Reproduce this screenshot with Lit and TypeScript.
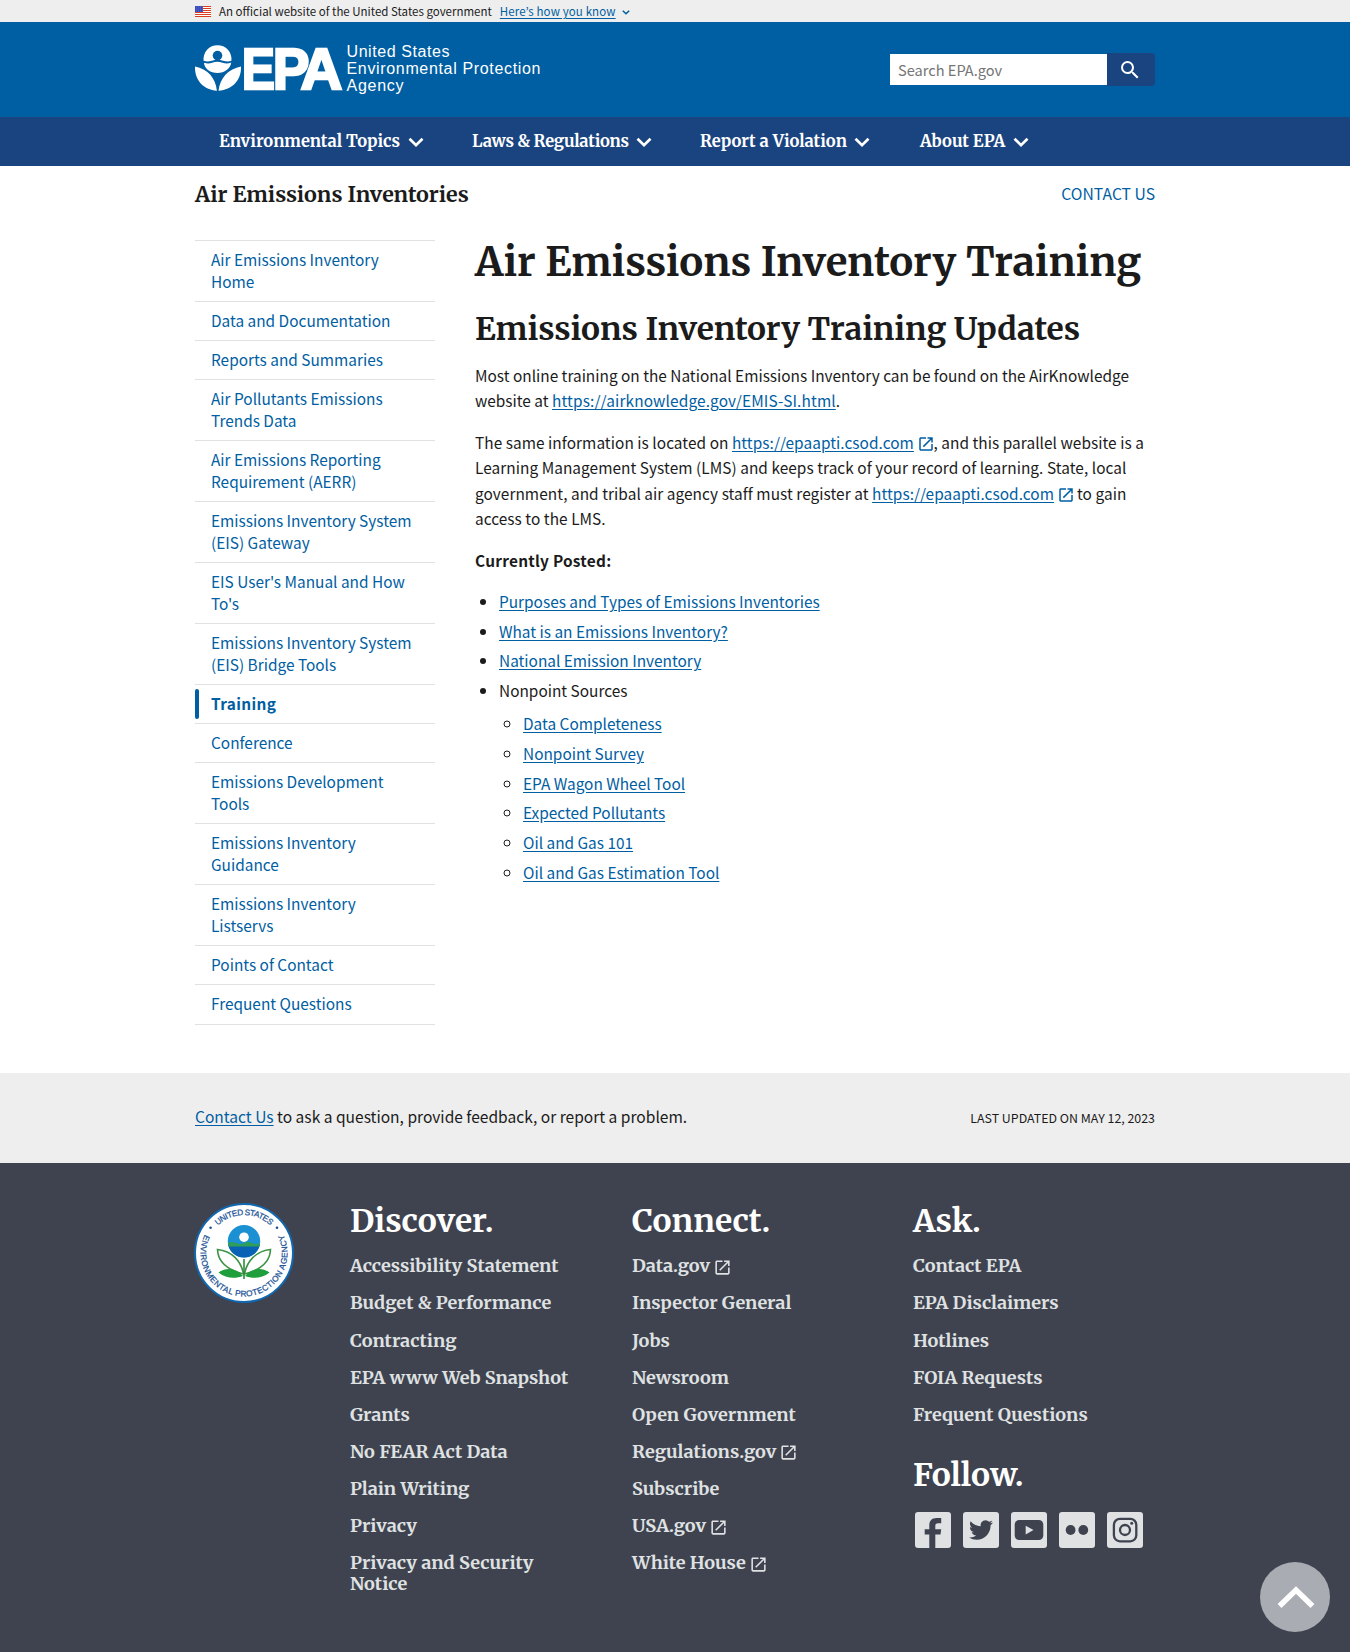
import { LitElement, html, svg, css, nothing } from "lit";
import { customElement, property } from "lit/decorators.js";

type Link = { label: string; external?: boolean };

const NAV = ["Environmental Topics", "Laws & Regulations", "Report a Violation", "About EPA"];

const SIDE = [
  "Air Emissions Inventory Home",
  "Data and Documentation",
  "Reports and Summaries",
  "Air Pollutants Emissions Trends Data",
  "Air Emissions Reporting Requirement (AERR)",
  "Emissions Inventory System (EIS) Gateway",
  "EIS User's Manual and How To's",
  "Emissions Inventory System (EIS) Bridge Tools",
  "Training",
  "Conference",
  "Emissions Development Tools",
  "Emissions Inventory Guidance",
  "Emissions Inventory Listservs",
  "Points of Contact",
  "Frequent Questions",
];

const POSTED = [
  "Purposes and Types of Emissions Inventories",
  "What is an Emissions Inventory?",
  "National Emission Inventory",
];

const NONPOINT = [
  "Data Completeness",
  "Nonpoint Survey",
  "EPA Wagon Wheel Tool",
  "Expected Pollutants",
  "Oil and Gas 101",
  "Oil and Gas Estimation Tool",
];

const DISCOVER: Link[] = [
  { label: "Accessibility Statement" },
  { label: "Budget & Performance" },
  { label: "Contracting" },
  { label: "EPA www Web Snapshot" },
  { label: "Grants" },
  { label: "No FEAR Act Data" },
  { label: "Plain Writing" },
  { label: "Privacy" },
  { label: "Privacy and Security Notice" },
];

const CONNECT: Link[] = [
  { label: "Data.gov", external: true },
  { label: "Inspector General" },
  { label: "Jobs" },
  { label: "Newsroom" },
  { label: "Open Government" },
  { label: "Regulations.gov", external: true },
  { label: "Subscribe" },
  { label: "USA.gov", external: true },
  { label: "White House", external: true },
];

const ASK: Link[] = [
  { label: "Contact EPA" },
  { label: "EPA Disclaimers" },
  { label: "Hotlines" },
  { label: "FOIA Requests" },
  { label: "Frequent Questions" },
];

const launchIcon = html`<svg class="launch" viewBox="0 0 24 24" aria-hidden="true">
  <path
    fill="currentColor"
    d="M19 19H5V5h7V3H5c-1.11 0-2 .9-2 2v14c0 1.1.89 2 2 2h14c1.1 0 2-.9 2-2v-7h-2v7zM14 3v2h3.59l-9.83 9.83 1.41 1.41L19 6.41V10h2V3h-7z"
  />
</svg>`;

@customElement("epa-banner")
export class EpaBanner extends LitElement {
  static styles = css`
    :host { display: block; background: #eee; }
    .inner {
      width: 960px;
      height: 22px;
      margin: 0 auto;
      display: flex;
      align-items: center;
      font-size: 11.5px;
      line-height: 16px;
    }
    .flag { width: 16px; height: 11px; margin-right: 8px; }
    a {
      margin-left: 8px;
      color: #005ea2;
      letter-spacing: 0.12px;
      text-decoration: underline;
      text-underline-offset: 1.5px;
    }
    .chev { width: 8px; height: 5px; margin: 3px 0 0 6px; }
  `;
  render() {
    return html`<div class="inner">
      <svg class="flag" viewBox="0 0 16 11" aria-hidden="true">
        <rect width="16" height="11" fill="#fff" />
        ${[0, 2, 4, 6, 8, 10].map((y) => svg`<rect y=${y} width="16" height="1" fill="#db3e1f" />`)}
        <rect width="8" height="6" fill="#1e33b1" />
        ${[1, 3, 5].map((y) => [1, 3, 5, 7].map((x) => svg`<rect x=${x - 0.3} y=${y - 0.4} width=".8" height=".8" fill="#fff" />`))}
      </svg>
      <span>An official website of the United States government</span>
      <a>Here’s how you know</a>
      <svg class="chev" viewBox="0 0 8 5" aria-hidden="true">
        <path d="M.8.7 4 3.8 7.2.7" fill="none" stroke="#005ea2" stroke-width="1.5" />
      </svg>
    </div>`;
  }
}

@customElement("epa-header")
export class EpaHeader extends LitElement {
  static styles = css`
    :host { display: block; }
    .top { background: #005ea2; }
    .bar {
      width: 960px;
      height: 95px;
      margin: 0 auto;
      display: flex;
      align-items: center;
      justify-content: space-between;
    }
    .logo { width: 350px; height: 52px; margin-bottom: 1px; overflow: visible; }
    .logo text { fill: #fff; font-family: "Liberation Sans", Arial, sans-serif; }
    .word { font-weight: bold; stroke: #fff; stroke-width: 2.4px; }
    .search { display: flex; align-items: center; }
    .field {
      box-sizing: border-box;
      width: 217px;
      height: 31px;
      padding: 0 8px;
      background: #fff;
      color: #757575;
      font-size: 14.6px;
      line-height: 31.5px;
    }
    .go {
      width: 48px;
      height: 33px;
      display: flex;
      align-items: center;
      justify-content: center;
      background: #1a4480;
      border-radius: 0 4px 4px 0;
    }
    .go svg { width: 24px; height: 24px; margin-right: 2px; }
    nav { background: #1a4480; }
    .items {
      box-sizing: border-box;
      width: 960px;
      height: 49px;
      margin: 0 auto;
      padding: 1px 24px 0;
      display: grid;
      grid-template-columns: 253px 228px 220px auto;
      align-items: center;
      color: #fff;
      font: bold 16.5px/24px Merriweather, "Noto Serif", serif;
    }
    .item { display: flex; align-items: center; white-space: nowrap; }
    .item:nth-child(2) { letter-spacing: -0.23px; }
    .item svg { width: 16px; height: 11px; margin-left: 7.5px; margin-top: 0; }
  `;
  render() {
    return html`
      <div class="top">
        <div class="bar">
          <svg class="logo" viewBox="0 0 350 52" role="img">
            <path fill="#fff" d="M8.6 17.8A14 14 0 1 1 36.400 17.800c-3 1.100-5.500.9-8.400-.1-3.800-1.300-7-1.300-11 0-2.900 1-5.400 1.200-8.400.1z" />
            <circle cx="22.500" cy="12.600" r="4.800" fill="#005ea2" />
            <path fill="#fff" d="M8.900 19.700c3 1 5.500 1 8.200.1 3.600-1.300 6.800-1.200 10.500 0 2.800.9 5.700.9 8.600-.2C35.500 26 29.600 30 22.500 30S9.600 26 8.900 19.700z" />
            <path fill="#fff" d="M0 23.500C12.500 26 20.500 34.500 21.900 47.800 8.500 46.500-.5 37.500 0 23.500z" />
            <path fill="#fff" d="M46 23.500C33.500 26 25 34.500 23.500 47.800 37 46.500 46.500 37.500 46 23.500z" />
            <text class="word" font-size="58" transform="translate(46.700 45.700) scale(.86 1)">E</text>
            <text class="word" font-size="58" transform="translate(77.700 45.700) scale(.95 1)">P</text>
            <text class="word" font-size="58" transform="translate(105.500 45.700) scale(1 1)">A</text>
            <g font-size="16">
              <text x="151.500" y="13.900" textLength="103" lengthAdjust="spacing">United States</text>
              <text x="151.500" y="30.500" textLength="194" lengthAdjust="spacing">Environmental Protection</text>
              <text x="151.500" y="47.500" textLength="57" lengthAdjust="spacing">Agency</text>
            </g>
          </svg>
          <div class="search">
            <div class="field">Search EPA.gov</div>
            <div class="go">
              <svg viewBox="0 0 24 24" aria-hidden="true">
                <path
                  fill="#fff"
                  d="M15.500 14h-.79l-.28-.27A6.471 6.471 0 0 0 16 9.500 6.500 6.500 0 1 0 9.500 16c1.610 0 3.090-.59 4.230-1.570l.27.28v.79l5 4.990L20.490 19l-4.990-5zm-6 0C7.010 14 5 11.990 5 9.500S7.010 5 9.500 5 14 7.010 14 9.500 11.990 14 9.500 14z"
                />
              </svg>
            </div>
          </div>
        </div>
      </div>
      <nav>
        <div class="items">
          ${NAV.map(
            (n) => html`<span class="item"
              >${n}<svg viewBox="0 0 16 11" aria-hidden="true">
                <path d="M1.500 1.700 8 8.200l6.500-6.500" fill="none" stroke="#fff" stroke-width="2.700" /></svg
            ></span>`
          )}
        </div>
      </nav>
    `;
  }
}

@customElement("epa-sidenav")
export class EpaSidenav extends LitElement {
  static styles = css`
    :host { display: block; }
    ul {
      list-style: none;
      margin: 0;
      padding: 0 0 1px;
      border-bottom: 1px solid #dfe1e2;
    }
    li {
      position: relative;
      border-top: 1px solid #dfe1e2;
      padding: 7px 16px 9px;
      color: #005ea2;
      font-size: 15.400px;
      line-height: 22px;
    }
    .current { font-weight: bold; letter-spacing: 0.35px; }
    .current::after {
      content: "";
      position: absolute;
      left: 0;
      top: 4px;
      bottom: 4px;
      width: 4px;
      border-radius: 2px;
      background: #005ea2;
    }
  `;
  render() {
    return html`<ul>
      ${SIDE.map((s) => html`<li class=${s === "Training" ? "current" : "entry"}>${s}</li>`)}
    </ul>`;
  }
}

@customElement("epa-article")
export class EpaArticle extends LitElement {
  static styles = css`
    :host { display: block; font-size: 15.400px; line-height: 25.400px; }
    h1, h2 {
      font-family: Merriweather, "Noto Serif", serif;
      font-weight: bold;
      margin: 0;
      white-space: nowrap;
    }
    h1 { font-size: 40.100px; line-height: 48px; }
    h2 { font-size: 31.700px; line-height: 38px; margin: 24px 0 14.700px; }
    p { margin: 0 0 16.100px; }
    .lms { letter-spacing: 0.05px; }
    b { letter-spacing: 0.25px; }
    a { color: #005ea2; text-decoration: underline; text-underline-offset: 2px; }
    .url { letter-spacing: 0.13px; }
    .launch { width: 18px; height: 18px; margin: 0 -1.500px 0 3px; color: #005ea2; vertical-align: -4px; }
    ul { margin: 0; padding-left: 24px; }
    li { margin-bottom: 4.240px; }
    ul ul { padding-top: 8px; list-style: circle; }
  `;
  render() {
    return html`
      <h1>Air Emissions Inventory Training</h1>
      <h2>Emissions Inventory Training Updates</h2>
      <p>
        Most online training on the National Emissions Inventory can be found on the AirKnowledge website at
        <a class="url">https://airknowledge.gov/EMIS-SI.html</a>.
      </p>
      <p class="lms">
        The same information is located on <a>https://epaapti.csod.com</a>${launchIcon}, and this parallel website is a
        Learning Management System (LMS) and keeps track of your record of learning. State, local government, and tribal
        air agency staff must register at <a>https://epaapti.csod.com</a>${launchIcon} to gain access to the LMS.
      </p>
      <p><b>Currently Posted:</b></p>
      <ul>
        ${POSTED.map((t) => html`<li><a>${t}</a></li>`)}
        <li>
          Nonpoint Sources
          <ul>
            ${NONPOINT.map((t) => html`<li><a>${t}</a></li>`)}
          </ul>
        </li>
      </ul>
    `;
  }
}

@customElement("epa-seal")
export class EpaSeal extends LitElement {
  static styles = css`
    :host { display: block; width: 100px; height: 100px; }
    svg { display: block; }
    text { font: 8.200px "Liberation Sans", Arial, sans-serif; fill: #1a5296; stroke: #1a5296; stroke-width: 0.25px; }
  `;
  render() {
    return html`<svg width="100" height="100" viewBox="0 0 100 100" role="img">
      <defs>
        <path id="arc-top" d="M12 50a38 38 0 0 1 76 0" />
        <path id="arc-bottom" d="M11.200 30.600a43.400 43.400 0 1 0 77.600 0" />
      </defs>
      <circle cx="50" cy="50" r="49" fill="#fff" stroke="#1168b0" stroke-width="2" />
      <text text-anchor="middle" textLength="58"><textPath href="#arc-top" startOffset="50%" textLength="58">UNITED STATES</textPath></text>
      <text text-anchor="middle" textLength="174"><textPath href="#arc-bottom" startOffset="50%" textLength="174">ENVIRONMENTAL PROTECTION AGENCY</textPath></text>
      <circle cx="16.600" cy="24.800" r="1.300" fill="#1a5296" />
      <circle cx="83" cy="24.800" r="1.300" fill="#1a5296" />
      <circle cx="50" cy="38.300" r="16.200" fill="#1b90d2" />
      <path fill="#0a62b4" d="M34.200 42a16.200 16.200 0 0 0 31.600 0z" />
      <path fill="#2f9e5b" d="M34 40q4-2 8 0t8 0 8 0 8 0l-.5 3.600h-31z" />
      <circle cx="50" cy="34.200" r="4.800" fill="#fff" />
      <g fill="none" stroke="#3d9445" stroke-width="1.600">
        <path d="M49.500 71C47 58 38 48 23.500 46.500 24 60 34 67 49.500 71z" />
        <path d="M50.500 71C53 58 62 48 76.500 46.500 76 60 66 67 50.500 71z" />
      </g>
      <path fill="#1f9e3c" d="M24.500 69.500C32 64 42 65 49 73c-8 3-17 2.500-24.500-3.500zM75.500 69.500C68 64 58 65 51 73c8 3 17 2.500 24.500-3.500z" />
      <path d="M50 56v20" stroke="#2b8a3e" stroke-width="1.600" />
    </svg>`;
  }
}

@customElement("epa-link-column")
export class EpaLinkColumn extends LitElement {
  static styles = css`
    :host {
      display: block;
      color: #dfe1e2;
      font: bold 18.080px/21.200px Merriweather, "Noto Serif", serif;
    }
    h2 { margin: 0 0 15.900px; color: #fff; font-size: 31.850px; line-height: 38px; }
    ul {
      list-style: none;
      margin: 0;
      padding: 0 40px 0 0;
      display: flex;
      flex-direction: column;
      gap: 15.900px;
    }
    .launch { width: 19px; height: 19px; margin: -4px 0 -4px 3px; vertical-align: -0.500px; }
  `;
  @property() heading = "";
  @property({ attribute: false }) links: Link[] = [];
  render() {
    return html`<h2>${this.heading}</h2>
      <ul>
        ${this.links.map((l) => html`<li>${l.label}${l.external ? launchIcon : nothing}</li>`)}
      </ul>`;
  }
}

@customElement("epa-social")
export class EpaSocial extends LitElement {
  static styles = css`
    :host { display: flex; gap: 12px; padding: 17.500px 0 0 2px; }
    svg { display: block; width: 36px; height: 36px; }
    .tile { fill: #dfe1e2; }
    .ink { fill: #3f434f; }
    .line { fill: none; stroke: #3f434f; stroke-width: 2.300px; }
  `;
  render() {
    const glyphs = [
      svg`<path class="ink" d="M14.300 36V22.500H9.700v-5.200h4.600v-3.600c0-4.900 2.600-7.600 7.300-7.600h4.600v5.200h-3c-2.300 0-2.900.8-2.900 2.800v3.200h5.900l-.7 5.200h-5.200V36z" />`,
      svg`<path class="ink" transform="translate(6 6)" d="M23.953 4.570a10 10 0 0 1-2.825.775 4.958 4.958 0 0 0 2.163-2.723c-.951.555-2.005.959-3.127 1.184a4.920 4.920 0 0 0-8.384 4.482C7.690 8.095 4.067 6.130 1.640 3.162a4.822 4.822 0 0 0-.666 2.475c0 1.710.870 3.213 2.188 4.096a4.904 4.904 0 0 1-2.228-.616v.060a4.923 4.923 0 0 0 3.946 4.827 4.996 4.996 0 0 1-2.212.085 4.936 4.936 0 0 0 4.604 3.417 9.867 9.867 0 0 1-6.102 2.105c-.390 0-.779-.023-1.170-.067a13.995 13.995 0 0 0 7.557 2.209c9.053 0 13.998-7.496 13.998-13.985 0-.210 0-.420-.015-.630A9.935 9.935 0 0 0 24 4.590z" />`,
      svg`<rect class="ink" x="3.700" y="8" width="28.600" height="20" rx="4.500" /><path class="tile" d="M14.700 13.800v8.600l7.800-4.300z" />`,
      svg`<circle class="ink" cx="11.600" cy="18" r="4.900" /><circle class="ink" cx="24.300" cy="18" r="4.900" />`,
      svg`<rect class="line" x="6.900" y="6.900" width="22.400" height="22.400" rx="6" /><circle class="line" cx="18" cy="18" r="5" /><circle class="ink" cx="24.700" cy="11.300" r="1.500" />`,
    ];
    return glyphs.map(
      (g) => html`<svg viewBox="0 0 36 36" aria-hidden="true"><rect class="tile" width="36" height="36" rx="3" />${g}</svg>`
    );
  }
}

@customElement("app-root")
export class AppRoot extends LitElement {
  static styles = css`
    :host {
      position: relative;
      height: 1652px;
      overflow: hidden;
      background: #fff;
      color: #1b1b1b;
      font-family: "Noto Sans CJK JP", "Open Sans", sans-serif;
      display: flex;
      flex-direction: column;
    }
    .wrap { width: 960px; margin: 0 auto; }
    .site {
      display: flex;
      justify-content: space-between;
      align-items: center;
      height: 26px;
      padding: 15px 0 29px;
    }
    .name { font: bold 21.400px/26px Merriweather, "Noto Serif", serif; padding-top: 2px; }
    .contact { color: #005ea2; font-size: 15.700px; line-height: 24px; }
    .columns { display: grid; grid-template-columns: 240px 680px; gap: 40px; height: 837px; }
    .side { margin-top: 4px; }
    .body { margin-top: 2.200px; }
    .feedback { background: #eee; }
    .feedback .wrap {
      box-sizing: border-box;
      height: 90px;
      padding-bottom: 4px;
      display: flex;
      justify-content: space-between;
      align-items: center;
      font-size: 15.550px;
    }
    .feedback a { color: #005ea2; text-decoration: underline; text-underline-offset: 2px; }
    .updated { font-size: 12.400px; text-transform: uppercase; padding-top: 4px; }
    footer { flex: 1; background: #3f434f; }
    .grid {
      display: grid;
      grid-template-columns: 155px 282px 281px 242px;
      align-items: start;
      padding-top: 38.500px;
    }
    .seal { margin: 1.500px 0 0 -0.800px; }
    .follow {
      margin: 31.500px 0 0;
      color: #fff;
      font: bold 31.850px/38px Merriweather, "Noto Serif", serif;
    }
    .totop { position: absolute; left: 1260px; top: 1562px; width: 70px; height: 70px; }
  `;
  render() {
    return html`
      <epa-banner></epa-banner>
      <epa-header></epa-header>
      <div class="wrap">
        <div class="site">
          <span class="name">Air Emissions Inventories</span>
          <span class="contact">CONTACT US</span>
        </div>
        <div class="columns">
          <epa-sidenav class="side"></epa-sidenav>
          <epa-article class="body"></epa-article>
        </div>
      </div>
      <div class="feedback">
        <div class="wrap">
          <span><a>Contact Us</a> to ask a question, provide feedback, or report a problem.</span>
          <span class="updated">Last updated on May 12, 2023</span>
        </div>
      </div>
      <footer>
        <div class="wrap grid">
          <epa-seal class="seal"></epa-seal>
          <epa-link-column heading="Discover." .links=${DISCOVER}></epa-link-column>
          <epa-link-column heading="Connect." .links=${CONNECT}></epa-link-column>
          <div>
            <epa-link-column heading="Ask." .links=${ASK}></epa-link-column>
            <h2 class="follow">Follow.</h2>
            <epa-social></epa-social>
          </div>
        </div>
      </footer>
      <svg class="totop" viewBox="0 0 70 70" aria-hidden="true">
        <circle cx="35" cy="35" r="35" fill="#a9acb2" />
        <path d="M19.500 44 36 28l16.500 16" fill="none" stroke="#fff" stroke-width="5.500" />
      </svg>
    `;
  }
}
